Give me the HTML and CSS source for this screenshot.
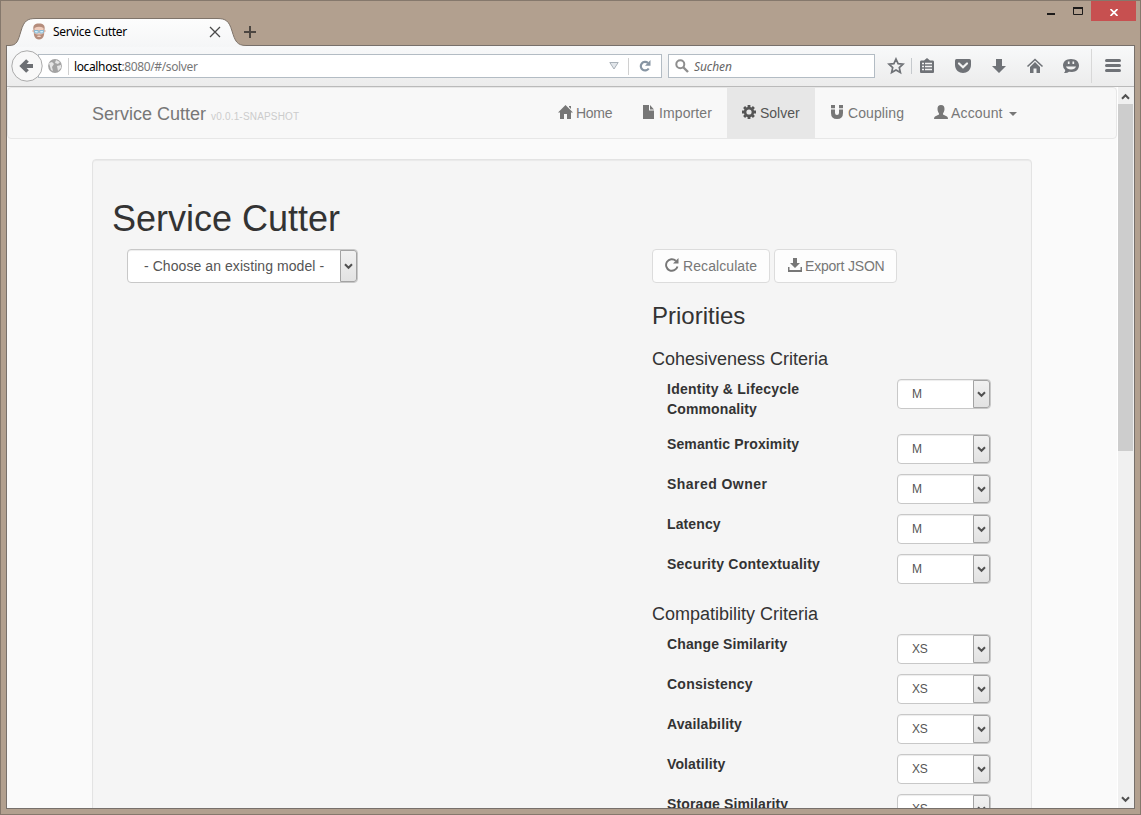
FILE: index.html
```html
<!DOCTYPE html>
<html lang="en">
<head>
<meta charset="utf-8">
<title>Service Cutter</title>
<link rel="stylesheet" href="styles.css">
</head>
<body>
<svg class="defs" width="0" height="0">
  <symbol id="chev" viewBox="0 0 9 7"><path d="M1 1.200 4.500 4.800 8 1.200" fill="none" stroke="#505050" stroke-width="2"/></symbol>
</svg>
<div class="window">
  <header class="titlebar">
    <div class="tab">
      <svg class="tab-shape" width="240" height="30" viewBox="0 0 240 30">
        <defs><linearGradient id="tg" x1="0" y1="0" x2="0" y2="1"><stop offset="0" stop-color="#fdfdfd"/><stop offset="1" stop-color="#f5f6f7"/></linearGradient></defs>
        <path d="M0 30V28.500H2C10 28.500 11 24 14 14 17 4 20 1.500 29 1.500H210C219 1.500 222 4 225 14 228 24 230 28.500 239 28.500V30Z" fill="url(#tg)"/>
        <path d="M0 28.500H2C10 28.500 11 24 14 14 17 4 20 1.500 29 1.500H210C219 1.500 222 4 225 14 228 24 230 28.500 239 28.500" fill="none" stroke="#7f746a"/>
      </svg>
      <div class="tab-body">
        <svg width="14" height="17" viewBox="0 0 14 17"><path d="M1.500 7C.5 2 3 .5 7 .5s6.500 1.500 5.500 6.500L12 12C11.500 15 9 16.500 7 16.500S2.500 15 2 12Z" fill="#b58d7c"/><path d="M2.500 5Q7 2.500 11.500 5V10.500L9 11.500H5L2.500 10.500Z" fill="#f0cdbd"/><path d="M5 13Q7 12 9 13L8.300 14H5.700Z" fill="#f0d5c8"/><path d="M.5 8H13.500" stroke="#e0b9a8" stroke-width="2"/><path d="M2.200 7.500H6.200V10H3ZM7.800 7.500H11.800L11 10H7.800Z" fill="#d5effa" stroke="#7fb4d2" stroke-width=".9"/></svg>
        <span class="tab-title">Service Cutter</span>
        <svg width="12" height="12" viewBox="0 0 12 12"><path d="M1 1 11 11M11 1 1 11" stroke="#4a4a4a" stroke-width="1.300"/></svg>
      </div>
    </div>
    <svg class="plus" width="12" height="12" viewBox="0 0 12 12"><path d="M6 0V12M0 6H12" stroke="#4c4641" stroke-width="2"/></svg>
    <div class="controls">
      <svg width="8" height="2"><path d="M0 0H8V2H0Z" fill="#1d1b1a"/></svg>
      <svg class="max" width="10" height="8"><path d="M.5 0V7.500H9.500V0M0 1H10" fill="none" stroke="#1d1b1a"/><path d="M0 0H10V2H0Z" fill="#1d1b1a"/></svg>
      <div class="close"><svg width="8" height="7" viewBox="0 0 8 7"><path d="M.5 0 7.500 7M7.500 0 .5 7" stroke="#fff" stroke-width="1.700"/></svg></div>
    </div>
  </header>
  <div class="frame">
    <div class="toolbar">
      <svg class="back" width="32" height="32" viewBox="0 0 32 32"><circle cx="16" cy="16" r="15.200" fill="#f8f8f8" stroke="#aaa"/><path d="M10.500 16H22M16.500 10.500 11 16 16.500 21.500" fill="none" stroke="#6c6f73" stroke-width="3.800"/></svg>
      <div class="urlbar">
        <svg width="14" height="14" viewBox="0 0 14 14"><circle cx="7" cy="7" r="6.900" fill="#a3a3a3"/><path d="M1 4 4 3 6 5 4 8 5 12 3 11ZM8 1l4 2-2 2-3-1ZM9 7l4-1v3l-3 3Z" fill="#e6e6e6"/></svg>
        <span class="rule"></span>
        <span class="url"><b>localhost</b>:8080/#/solver</span>
        <svg width="10" height="8" viewBox="0 0 10 8"><path d="M.8.500H9.200L5 7Z" fill="#e2e6ea" stroke="#a9b1b8"/></svg>
        <span class="rule"></span>
        <svg class="reload" width="12" height="12" viewBox="0 0 12 12"><path d="M9.700 8.500A4.300 4.300 0 1 1 9 3" fill="none" stroke="#8795a3" stroke-width="2.200"/><path d="M11.500 0V5.700H6Z" fill="#8795a3"/></svg>
      </div>
      <div class="search">
        <svg width="14" height="14" viewBox="0 0 14 14"><circle cx="5.300" cy="5.300" r="4" fill="none" stroke="#8e8e8e" stroke-width="2"/><path d="M8 8 13 13" stroke="#8e8e8e" stroke-width="2.400"/></svg>
        <i>Suchen</i>
      </div>
      <div class="tools">
        <svg width="18" height="18" viewBox="0 0 18 18"><path d="M9 2 11.100 6.700 16 7.200 12.300 10.600 13.400 15.600 9 13 4.600 15.600 5.700 10.600 2 7.200 6.900 6.700Z" fill="none" stroke="#6f7277" stroke-width="1.700"/></svg>
        <span class="sep"></span>
        <svg width="18" height="18" viewBox="0 0 18 18"><path d="M2 5Q2 3.500 3 3.500H6L9 1 12 3.500h3q1 0 1 1.500V15q0 1-1 1H3q-1 0-1-1Z" fill="#6f7277"/><path d="M4 6.500H6M7 6.500H14M4 9.500H6M7 9.500H14M4 12.500H6M7 12.500H14" stroke="#f3f3f3" stroke-width="1.600"/></svg>
        <svg width="18" height="18" viewBox="0 0 18 18"><path d="M1 3.500Q1 2 2.500 2h13Q17 2 17 3.500V8C17 13 13 16 9 16S1 13 1 8Z" fill="#6f7277"/><path d="M5 6.500 9 10.200 13 6.500" fill="none" stroke="#f3f3f3" stroke-width="2.200" stroke-linecap="round"/></svg>
        <svg width="18" height="18" viewBox="0 0 18 18"><path d="M6 2h6V9H16L9 16 2 9H6Z" fill="#6f7277"/></svg>
        <svg width="18" height="18" viewBox="0 0 18 18"><path d="M1.500 9.500 9 2.500 16.500 9.500" fill="none" stroke="#6f7277" stroke-width="1.600"/><path d="M9 5 14 10V16H10.500V11.500h-3V16H4V10Z" fill="#6f7277"/></svg>
        <svg width="18" height="18" viewBox="0 0 18 18"><path d="M9 2c5 0 8 2.800 8 6.500S14 15 10 15L7 14.800Q5 16.500 2 16 3.500 14.500 3.200 13 1 11.300 1 8.500C1 4.800 4 2 9 2Z" fill="#6f7277"/><path d="M6.700 4.500V7M11.300 4.500V7" stroke="#f3f3f3" stroke-width="1.700"/><path d="M4 9.500H14Q13 12.500 9 12.500T4 9.500Z" fill="#f3f3f3"/></svg>
        <span class="sep tall"></span>
        <svg width="18" height="18" viewBox="0 0 18 18"><path d="M2.500 3.500H15.500M2.500 8.500H15.500M2.500 13.500H15.500" stroke="#6f7277" stroke-width="3" stroke-linecap="round"/></svg>
      </div>
    </div>
    <div class="viewport">
      <main class="page">
        <nav class="navbar">
          <div class="brand">Service Cutter <small>v0.0.1-SNAPSHOT</small></div>
          <ul class="nav">
            <li class="n-home"><svg width="15" height="14" viewBox="0 0 15 14"><path d="M7.500 0 15 7.500H13V14H9V9H6v5H2V7.500H0ZM11 1h2V4l-2-2Z" fill="#777"/></svg><span>Home</span></li>
            <li class="n-imp"><svg width="11" height="14" viewBox="0 0 11 14"><path d="M0 0H6V5.500H11V14H0ZM7 0 11 4.500H7Z" fill="#777"/></svg><span>Importer</span></li>
            <li class="n-solver"><svg width="14" height="14" viewBox="-7 -7 14 14"><circle r="3.900" fill="none" stroke="#555" stroke-width="2.600"/><path d="M0-7V-4.500M0 4.500V7M-7 0H-4.500M4.500 0H7M-4.900-4.900-3.300-3.300M3.300 3.300 4.900 4.900M-4.900 4.900-3.300 3.300M3.300-3.300 4.900-4.900" stroke="#555" stroke-width="2.800"/></svg><span>Solver</span></li>
            <li class="n-coup"><svg width="14" height="14" viewBox="0 0 14 14"><path d="M1 4.500H5V8Q5 10 7 10T9 8V4.500H13V8Q13 14 7 14T1 8ZM1 0H5V3.300H1ZM9 0H13V3.300H9Z" fill="#777"/></svg><span>Coupling</span></li>
            <li class="n-acc"><svg width="14" height="14" viewBox="0 0 14 14"><path d="M7 0C9.500 0 10.500 1.500 10.500 4 10.500 6 9.500 7.500 9 8.500V9.500L13 11.500Q14 12 14 14H0Q0 12 1 11.500L5 9.500V8.500C4.500 7.500 3.500 6 3.500 4 3.500 1.500 4.500 0 7 0Z" fill="#777"/></svg><span>Account</span><em class="caret"></em></li>
          </ul>
        </nav>
        <section class="well">
          <h1>Service Cutter</h1>
          <div class="columns">
            <div class="left">
              <div class="select model"><span>- Choose an existing model -</span><div class="drop"><svg width="9" height="7"><use href="#chev"/></svg></div></div>
            </div>
            <div class="right">
              <div class="buttons">
                <div class="btn recalc"><svg width="14" height="14" viewBox="0 0 14 14"><path d="M12.500 8.500A5.800 5.800 0 1 1 10.800 2.700" fill="none" stroke="#777" stroke-width="1.900"/><path d="M13.500 0V5.500H8Z" fill="#777"/></svg><span>Recalculate</span></div>
                <div class="btn export"><svg width="14" height="14" viewBox="0 0 14 14"><path d="M5 0H9V5h3L7 10 2 5H5ZM0 9H1.500V12H12.500V9H14V14H0Z" fill="#777"/></svg><span>Export JSON</span></div>
              </div>
              <h3>Priorities</h3>
              <h4 class="coh">Cohesiveness Criteria</h4>
              <div class="row tall-row"><label><span class="wide">Identity &amp; Lifecycle</span><br>Commonality</label><div class="select sm"><span>M</span><div class="drop"><svg width="9" height="7"><use href="#chev"/></svg></div></div></div>
              <div class="row"><label>Semantic Proximity</label><div class="select sm"><span>M</span><div class="drop"><svg width="9" height="7"><use href="#chev"/></svg></div></div></div>
              <div class="row"><label class="wider">Shared Owner</label><div class="select sm"><span>M</span><div class="drop"><svg width="9" height="7"><use href="#chev"/></svg></div></div></div>
              <div class="row"><label>Latency</label><div class="select sm"><span>M</span><div class="drop"><svg width="9" height="7"><use href="#chev"/></svg></div></div></div>
              <div class="row"><label class="wide">Security Contextuality</label><div class="select sm"><span>M</span><div class="drop"><svg width="9" height="7"><use href="#chev"/></svg></div></div></div>
              <h4 class="comp">Compatibility Criteria</h4>
              <div class="row"><label>Change Similarity</label><div class="select sm xs"><span>XS</span><div class="drop"><svg width="9" height="7"><use href="#chev"/></svg></div></div></div>
              <div class="row"><label class="wide">Consistency</label><div class="select sm xs"><span>XS</span><div class="drop"><svg width="9" height="7"><use href="#chev"/></svg></div></div></div>
              <div class="row"><label>Availability</label><div class="select sm xs"><span>XS</span><div class="drop"><svg width="9" height="7"><use href="#chev"/></svg></div></div></div>
              <div class="row"><label>Volatility</label><div class="select sm xs"><span>XS</span><div class="drop"><svg width="9" height="7"><use href="#chev"/></svg></div></div></div>
              <div class="row"><label>Storage Similarity</label><div class="select sm xs"><span>XS</span><div class="drop"><svg width="9" height="7"><use href="#chev"/></svg></div></div></div>
            </div>
          </div>
        </section>
      </main>
      <aside class="scrollbar">
        <svg class="up" width="9" height="7" viewBox="0 0 9 7"><path d="M1 5.800 4.500 2.200 8 5.800" fill="none" stroke="#505050" stroke-width="2"/></svg>
        <div class="thumb"></div>
        <svg class="down" width="9" height="7"><use href="#chev"/></svg>
      </aside>
    </div>
  </div>
</div>
</body>
</html>
```
FILE: styles.css
```css
* { box-sizing: border-box; }
body { margin: 0; overflow: hidden; font-family: "Liberation Sans", Arial, sans-serif; font-size: 14px; line-height: 20px; color: #333; }
svg { display: block; flex: none; }
.defs { display: none; }
.window { width: 1141px; height: 815px; border: 1px solid #85786c; background: #b2a08f; padding: 0 4px 0 5px; }

/* Title bar */
.titlebar { display: flex; height: 44px; }
.tab { display: grid; width: 240px; height: 30px; margin: 15px 0 0 1px; flex: none; z-index: 1; }
.tab-shape, .tab-body { grid-area: 1 / 1; }
.tab-shape { margin-top: 1px; }
.tab-body { display: flex; align-items: center; padding: 0 26px 0 25px; height: 31px; z-index: 1; }
.tab-title { flex: 1; margin-left: 7px; font: 12px/16px "Noto Sans", sans-serif; color: #000; letter-spacing: -.33px; white-space: nowrap; }
.plus { margin: 25px 0 0 -3px; }
.controls { display: flex; margin-left: auto; }
.controls > svg { margin: 12px 18px 0 0; }
.controls > .max { margin: 6px 8px 0 0; }
.close { display: flex; justify-content: center; align-items: center; width: 45px; height: 20px; padding-top: 2px; padding-left: 1px; background: #c75050; }

/* Frame and toolbar */
.frame { width: 1129px; height: 764px; border: 1px solid #77706b; }
.toolbar { display: flex; height: 41px; background: linear-gradient(#f8f9fa, #ececec); border-bottom: 1px solid #bababa; }
.back { margin: 4px 0 0 4px; z-index: 1; }
.urlbar, .search { display: flex; align-items: center; height: 24px; margin-top: 8px; background: #fff; border: 1px solid #b3bcc4; }
.urlbar { width: 624px; margin-left: -5px; padding-left: 9px; font: 12px/16px "Noto Sans", sans-serif; color: #777; }
.rule { width: 1px; height: 17px; margin-left: 6px; background: #d0d0d0; }
.url { flex: 1; margin-left: 5px; padding-top: 2px; letter-spacing: -.37px; white-space: nowrap; }
.url b { font-weight: 400; color: #000; }
.url + svg + .rule { margin-left: 9px; }
.reload { margin: 0 10px; }
.search { width: 207px; margin-left: 6px; padding-left: 6px; font: 12px/16px "Noto Sans", sans-serif; color: #666; }
.search i { margin-left: 5px; padding-top: 2px; letter-spacing: -.1px; }
.tools { display: flex; align-items: center; height: 40px; padding-left: 12px; }
.tools svg + svg { margin-left: 18px; }
.sep { width: 1px; height: 16px; margin: 0 6px; background: #c5c9cd; }
.sep.tall { height: 34px; margin: 0 12px 0 11px; background: #d8d8d8; }

/* Page */
.viewport { display: flex; height: 721px; overflow: hidden; background: #fafafa; }
.page { width: 1110px; flex: none; }
.navbar { display: flex; justify-content: space-between; height: 52px; padding: 0 84px; background: #f8f8f8; border: 1px solid #e7e7e7; border-radius: 4px; }
.brand { margin-top: 16px; font-size: 18px; color: #777; white-space: nowrap; }
.brand small { font-size: 10px; letter-spacing: .18px; color: #ccc; }
.nav { display: flex; margin: 0; padding: 0; list-style: none; color: #777; }
.nav li { display: flex; height: 50px; padding: 15px 0 0 15px; white-space: nowrap; }
.nav svg { margin: 2px 3px 0 0; }
.n-home { width: 84px; }
.n-home span { letter-spacing: -.3px; }
.n-imp { width: 100px; }
.nav .n-imp svg { margin: 2px 5px 0 1px; }
.n-solver { width: 88px; background: #e7e7e7; color: #555; }
.nav .n-solver svg, .nav .n-coup svg { margin-right: 4px; }
.n-coup { width: 104px; }
.n-coup span, .n-imp span { letter-spacing: .1px; }
.n-acc { width: 113px; }
.n-acc span { letter-spacing: .15px; }
.caret { width: 8px; height: 4px; margin: 9px 0 0 6px; border: 4px solid transparent; border-top-color: #777; border-bottom: 0; }
.well { width: 940px; height: 700px; margin: 20px 0 0 85px; padding: 19px; background: #f5f5f5; border: 1px solid #e3e3e3; border-radius: 4px; box-shadow: inset 0 1px 1px rgba(0,0,0,.05); }
h1, h3, h4 { margin: 0; font-weight: 400; white-space: nowrap; }
h1 { margin: 20px 0 10px; font-size: 36px; line-height: 40px; }
.columns { display: flex; }
.left { width: 540px; padding-left: 15px; flex: none; }
.right { width: 345px; }
.select { display: flex; justify-content: space-between; background: #fff; border: 1px solid #c8c8c8; border-radius: 4px; color: #555; box-shadow: inset 0 1px 1px rgba(0,0,0,.075); white-space: nowrap; }
.model { width: 231px; height: 34px; line-height: 32px; padding-left: 16px; letter-spacing: .07px; }
.drop { display: flex; align-items: center; justify-content: center; width: 17px; background: linear-gradient(#f1f1f1, #e2e2e2); border: 1px solid #a3a3a3; border-radius: 0 3px 3px 0; }
.sm { width: 94px; height: 30px; padding-left: 14px; font-size: 12px; line-height: 28px; flex: none; }
.xs { letter-spacing: -.3px; }
.buttons { display: flex; gap: 4px; }
.btn { display: flex; height: 34px; padding: 6px 0 0 12px; background: #fdfdfd; border: 1px solid #dcdcdc; border-radius: 4px; color: #777; white-space: nowrap; }
.btn svg { margin: 2px 4px 0 0; }
.recalc { width: 118px; letter-spacing: .08px; }
.export { width: 123px; letter-spacing: -.2px; }
.export svg { margin-left: 1px; margin-right: 3px; }
h3 { margin-top: 20px; font-size: 24px; line-height: 26px; }
h4 { font-size: 18px; line-height: 20px; }
.coh { margin: 20px 0 10px; }
.comp { margin: 10px 0; }
.row { display: flex; justify-content: space-between; height: 40px; padding: 0 6px 0 15px; }
.tall-row { height: 55px; }
label { font-weight: 700; letter-spacing: .12px; white-space: nowrap; }
.wide { letter-spacing: .24px; }
.wider { letter-spacing: .45px; }

/* Scrollbar */
.scrollbar { display: flex; flex-direction: column; align-items: center; width: 17px; padding: 6px 1px 5px 0; background: #f0f0f0; border-left: 1px solid #fff; }
.thumb { width: 15px; height: 347px; margin-top: 4px; flex: none; background: #cdcdcd; }
.down { margin-top: auto; }
```
